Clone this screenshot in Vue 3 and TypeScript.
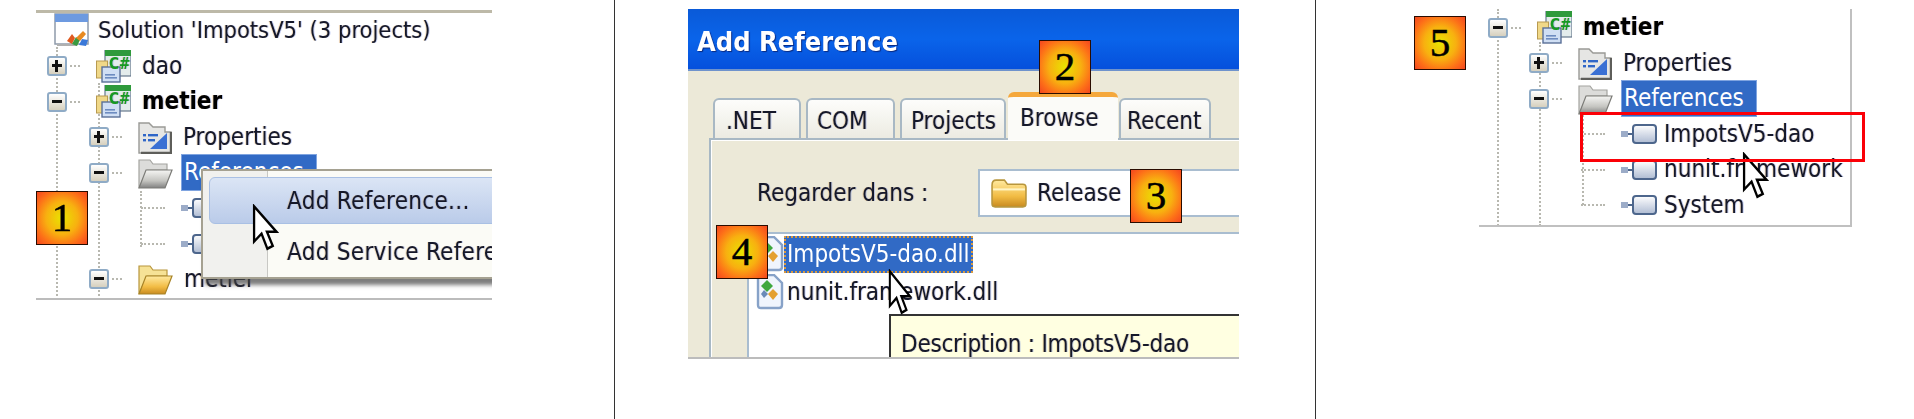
<template>
  <div class="page">
    <svg class="sprites" width="0" height="0" aria-hidden="true">
      <defs>
        <linearGradient id="g-asm" x1="0" y1="0" x2="0" y2="1">
          <stop offset="0" stop-color="#ffffff" />
          <stop offset="1" stop-color="#aebbd2" />
        </linearGradient>
        <linearGradient id="g-yellow" x1="0" y1="0" x2="0" y2="1">
          <stop offset="0" stop-color="#ffeaa0" />
          <stop offset="0.6" stop-color="#f2bc44" />
          <stop offset="1" stop-color="#c88a20" />
        </linearGradient>
        <linearGradient id="g-gray" x1="0" y1="0" x2="0" y2="1">
          <stop offset="0" stop-color="#f6f6f4" />
          <stop offset="0.6" stop-color="#c4c4c0" />
          <stop offset="1" stop-color="#808080" />
        </linearGradient>
      </defs>
      <symbol id="ic-solution" viewBox="0 0 35 35">
        <rect x="1" y="1" width="33" height="30" fill="#fff" stroke="#8f9bab" stroke-width="1.5" />
        <rect x="1" y="1" width="33" height="8" fill="#6d9ae0" />
        <rect x="3" y="31" width="20" height="2" fill="#b0b0b0" />
        <path d="M13 28l5-7 3 4-3 6z" fill="#e05a20" />
        <path d="M18 31l4-7 4 3-3 6z" fill="#3a9a40" />
        <path d="M22 25l7-7 3 3-6 7z" fill="#e88a20" />
        <path d="M25 32l3-6 6 1-2 6z" fill="#3a78d8" />
      </symbol>
      <symbol id="ic-csharp" viewBox="0 0 35 33">
        <rect x="9" y="0" width="26" height="26" fill="#e4ecec" stroke="#66788c" stroke-width="1.2" />
        <rect x="9" y="0" width="26" height="6" fill="#2f9a3c" />
        <rect x="0.5" y="11" width="11" height="17" fill="#f0d888" stroke="#b89a50" stroke-width="1" />
        <rect x="6" y="17" width="18" height="15" fill="#d0dff4" stroke="#5a7098" stroke-width="1.4" />
        <rect x="9" y="24" width="10" height="1.6" fill="#6d8cc0" />
        <rect x="9" y="27" width="12" height="1.6" fill="#6d8cc0" />
      </symbol>
      <symbol id="ic-props" viewBox="0 0 34 33">
        <path d="M1 32V2h10l4 4h12v5h6v21z" fill="#e6e6e4" stroke="#9a9a96" stroke-width="1.4" />
        <path d="M33 11v21H3" fill="none" stroke="#5e5e5a" stroke-width="2.4" />
        <rect x="5" y="13" width="3" height="2.4" fill="#2f66c8" />
        <rect x="10" y="13" width="10" height="2.4" fill="#2f66c8" />
        <rect x="5" y="18" width="3" height="2.4" fill="#2f66c8" />
        <rect x="10" y="18" width="7" height="2.4" fill="#2f66c8" />
        <path d="M12 28L29 12v16z" fill="#3a70d4" />
      </symbol>
      <symbol id="ic-folder-gray" viewBox="0 0 35 32">
        <path d="M1 31V3h11l3 4h14v6H9z" fill="#dcdcda" stroke="#a4a4a0" stroke-width="1.2" />
        <path d="M1 31l7-18h26l-7 18z" fill="url(#g-gray)" stroke="#7c7c78" stroke-width="1.2" />
      </symbol>
      <symbol id="ic-folder-yellow" viewBox="0 0 35 32">
        <path d="M1 31V3h11l3 4h14v6H9z" fill="#f6e296" stroke="#b8963c" stroke-width="1.2" />
        <path d="M1 31l7-18h26l-7 18z" fill="url(#g-yellow)" stroke="#a88428" stroke-width="1.2" />
      </symbol>
      <symbol id="ic-combo-folder" viewBox="0 0 35 30">
        <path d="M1 7c0-3 1-5 4-5h8l3 4h15c2 0 3 1 3 3v16c0 2-1 3-3 3H4c-2 0-3-1-3-3z" fill="url(#g-yellow)" stroke="#b8963c" stroke-width="1.5" />
        <path d="M2 11h31" stroke="#fff4c4" stroke-width="2" />
      </symbol>
      <symbol id="ic-asm" viewBox="0 0 36 22">
        <rect x="0" y="8" width="7" height="6" fill="#9cacc8" />
        <rect x="7" y="10" width="5" height="2" fill="#4d668c" />
        <rect x="12" y="2" width="23" height="18" rx="3" fill="url(#g-asm)" stroke="#4d668c" stroke-width="2" />
      </symbol>
      <symbol id="ic-doc" viewBox="0 0 24 24">
        <path d="M1 23V1h14l8 8v14z" fill="#fff" stroke="#8a94a4" stroke-width="1.6" />
      </symbol>
      <symbol id="ic-dll" viewBox="0 0 28 36">
        <path d="M2 4c0-2 1-3 3-3h13l8 8v22c0 2-1 3-3 3H5c-2 0-3-1-3-3z" fill="#f0f5fd" stroke="#87a2c8" stroke-width="2.4" />
        <path d="M11 6l6 6-6 6-6-6z" fill="#3ea83e" />
        <path d="M17 15l5 5-5 6-5-6z" fill="#e4a030" />
        <path d="M8 16l4 4-4 4-3-4z" fill="#6a8ab8" />
      </symbol>
      <symbol id="ic-cursor" viewBox="0 0 13 20" preserveAspectRatio="none">
        <path d="M1 1v15l3.6-3.4L7.4 19l2.6-1.2-2.8-6h4.6z" fill="#fff" stroke="#000" stroke-width="1.1" stroke-linejoin="miter" />
      </symbol>
    </svg>

    <!-- step 1: context menu on References -->
    <section class="col col-one">
      <div class="stage stage-one">
        <div class="shot shot-one">
          <div class="tree">
            <i v-for="(g, i) in guidesOne" :key="i" class="guide" :style="guideStyle(g)"></i>
            <div v-for="r in rowsOne" :key="r.id" class="row" :class="{ leaf: r.expander === 'leaf', root: r.expander === 'none' }" :style="{ paddingLeft: r.indent + 'px' }">
              <span v-if="r.expander === 'plus' || r.expander === 'minus'" class="exp-cell">
                <b class="exp" :class="r.expander"></b><i class="dash"></i>
              </span>
              <span v-else-if="r.expander === 'leaf'" class="exp-cell"><i class="dash long"></i></span>
              <svg class="icon" :class="r.icon">
                <use :href="'#ic-' + r.icon" />
                <text v-if="r.icon === 'csharp'" x="13" y="19" class="cs-text">C#</text>
              </svg>
              <span class="label" :class="{ strong: r.bold, selected: r.selected }">{{ r.label }}</span>
            </div>
          </div>
          <div class="ctx-menu">
            <div class="ctx-item hot">Add Reference...</div>
            <div class="ctx-item">Add Service Reference...</div>
          </div>
          <svg class="cursor cursor-one"><use href="#ic-cursor" /></svg>
        </div>
        <div class="badge badge-one">1</div>
      </div>
    </section>

    <!-- steps 2 to 4: Add Reference dialog -->
    <section class="col col-two">
      <div class="stage stage-two">
        <div class="shot shot-two">
          <div class="titlebar">Add Reference</div>
          <div class="tabs">
            <div v-for="t in tabs" :key="t.label" class="tab" :class="{ active: t.label === 'Browse' }" :style="{ width: t.width + 'px', paddingLeft: t.pad + 'px' }">{{ t.label }}</div>
          </div>
          <div class="tab-panel">
            <div class="lookin">
              <span class="lookin-label">Regarder dans :</span>
              <div class="combo">
                <svg class="combo-icon"><use href="#ic-combo-folder" /></svg>
                <span>Release</span>
              </div>
            </div>
            <div class="files">
              <div v-for="f in files" :key="f.name" class="file">
                <svg class="file-icon"><use href="#ic-dll" /></svg>
                <span class="file-name" :class="{ selected: f.selected }">{{ f.name }}</span>
              </div>
            </div>
          </div>
          <div class="tooltip">Description : ImpotsV5-dao</div>
          <svg class="cursor cursor-two"><use href="#ic-cursor" /></svg>
        </div>
        <div class="badge badge-two">2</div>
        <div class="badge badge-three">3</div>
        <div class="badge badge-four">4</div>
      </div>
    </section>

    <!-- step 5: the new reference in the tree -->
    <section class="col col-three">
      <div class="badge badge-five">5</div>
      <div class="stage stage-three">
        <div class="shot shot-three">
          <div class="tree">
            <i v-for="(g, i) in guidesThree" :key="i" class="guide" :style="guideStyle(g)"></i>
            <div v-for="r in rowsThree" :key="r.id" class="row" :class="{ leaf: r.expander === 'leaf', root: r.expander === 'none' }" :style="{ paddingLeft: r.indent + 'px' }">
              <span v-if="r.expander === 'plus' || r.expander === 'minus'" class="exp-cell">
                <b class="exp" :class="r.expander"></b><i class="dash"></i>
              </span>
              <span v-else-if="r.expander === 'leaf'" class="exp-cell"><i class="dash long"></i></span>
              <svg class="icon" :class="r.icon">
                <use :href="'#ic-' + r.icon" />
                <text v-if="r.icon === 'csharp'" x="13" y="19" class="cs-text">C#</text>
              </svg>
              <span class="label" :class="{ strong: r.bold, selected: r.selected }">{{ r.label }}</span>
            </div>
          </div>
          <svg class="cursor cursor-three"><use href="#ic-cursor" /></svg>
        </div>
        <div class="red-box"></div>
      </div>
    </section>
  </div>
</template>

<script setup lang="ts">
type Expander = 'plus' | 'minus' | 'leaf' | 'none'

interface TreeRow {
  id: string
  indent: number
  expander: Expander
  icon: string
  label: string
  bold?: boolean
  selected?: boolean
}

interface Guide {
  x: number
  top: number
  height: number
}

const rowsOne: TreeRow[] = [
  { id: 'sol', indent: 18, expander: 'none', icon: 'solution', label: "Solution 'ImpotsV5' (3 projects)" },
  { id: 'dao', indent: 11, expander: 'plus', icon: 'csharp', label: 'dao' },
  { id: 'metier', indent: 11, expander: 'minus', icon: 'csharp', label: 'metier', bold: true },
  { id: 'props', indent: 53, expander: 'plus', icon: 'props', label: 'Properties' },
  { id: 'refs', indent: 53, expander: 'minus', icon: 'folder-gray', label: 'References', selected: true },
  { id: 'nunit', indent: 101, expander: 'leaf', icon: 'asm', label: 'nunit.framework' },
  { id: 'system', indent: 101, expander: 'leaf', icon: 'asm', label: 'System' },
  { id: 'folder', indent: 53, expander: 'minus', icon: 'folder-yellow', label: 'metier' },
  { id: 'doc', indent: 101, expander: 'leaf', icon: 'doc', label: '' }
]

const rowsThree: TreeRow[] = [
  { id: 'metier', indent: 9, expander: 'minus', icon: 'csharp', label: 'metier', bold: true },
  { id: 'props', indent: 50, expander: 'plus', icon: 'props', label: 'Properties' },
  { id: 'refs', indent: 50, expander: 'minus', icon: 'folder-gray', label: 'References', selected: true },
  { id: 'dao', indent: 98, expander: 'leaf', icon: 'asm', label: 'ImpotsV5-dao' },
  { id: 'nunit', indent: 98, expander: 'leaf', icon: 'asm', label: 'nunit.framework' },
  { id: 'system', indent: 98, expander: 'leaf', icon: 'asm', label: 'System' }
]

const guidesOne: Guide[] = [
  { x: 20, top: 34, height: 260 },
  { x: 62, top: 70, height: 220 },
  { x: 104, top: 178, height: 56 }
]

const guidesThree: Guide[] = [
  { x: 18, top: 0, height: 217 },
  { x: 60, top: 33, height: 184 },
  { x: 103, top: 106, height: 90 }
]

const tabs = [
  { label: '.NET', width: 88, pad: 11 },
  { label: 'COM', width: 89, pad: 9 },
  { label: 'Projects', width: 106, pad: 9 },
  { label: 'Browse', width: 110, pad: 12 },
  { label: 'Recent', width: 92, pad: 6 }
]

const files = [
  { name: 'ImpotsV5-dao.dll', selected: true },
  { name: 'nunit.framework.dll', selected: false }
]

const guideStyle = (g: Guide) => ({
  left: `${g.x}px`,
  top: `${g.top}px`,
  height: `${g.height}px`
})
</script>

<style>
html,
body {
  margin: 0;
  background: #fff;
}
</style>

<style scoped>
.page {
  display: grid;
  grid-template-columns: 615px 701px 598px;
  width: 1914px;
  height: 419px;
  overflow: hidden;
  background: #fff;
  font-family: "DejaVu Sans Condensed", "DejaVu Sans", sans-serif;
  font-stretch: condensed;
  font-size: 24px;
  color: #15182a;
}

.sprites {
  position: absolute;
}

.cs-text {
  font-family: "DejaVu Sans", sans-serif;
  font-size: 15px;
  font-weight: 700;
  fill: #159a22;
}

.col {
  height: 419px;
  box-sizing: border-box;
}

.col-one {
  border-right: 1px solid #333;
  padding: 10px 0 0 36px;
}

.col-two {
  border-right: 1px solid #333;
  padding: 9px 0 0 73px;
}

.col-three {
  display: flex;
  align-items: flex-start;
  gap: 13px;
  padding: 9px 0 0 98px;
}

.stage {
  position: relative;
}

.shot {
  position: relative;
  overflow: hidden;
  box-sizing: border-box;
  filter: blur(0.55px);
  text-shadow: -1px 0 rgba(230, 150, 40, 0.28), 1px 0 rgba(50, 90, 220, 0.28);
}

.shot-one {
  width: 456px;
  height: 290px;
  border-top: 3px solid #bdb9a8;
  border-bottom: 2px solid #bcbcbc;
}

.shot-two {
  width: 551px;
  height: 350px;
  background: #ece9d8;
  border-bottom: 2px solid #bcbcbc;
}

.shot-three {
  width: 373px;
  height: 218px;
  border-right: 2px solid #c0c0c0;
  border-bottom: 2px solid #c0c0c0;
}

/* tree */
.tree {
  position: relative;
}

.shot-three .tree {
  padding-top: 1px;
}

.guide {
  position: absolute;
  border-left: 2px dotted #b8b8b0;
}

.row {
  position: relative;
  display: flex;
  align-items: center;
  height: 35.5px;
  white-space: nowrap;
}

.exp-cell {
  display: flex;
  align-items: center;
  flex: none;
  width: 49px;
}

.leaf .exp-cell {
  width: 44px;
}

.exp {
  position: relative;
  flex: none;
  box-sizing: border-box;
  width: 20px;
  height: 20px;
  border: 2px solid #8fabc6;
  border-radius: 3px;
  background: linear-gradient(#fff, #d6d0be);
}

.exp::before {
  content: "";
  position: absolute;
  left: 3px;
  right: 3px;
  top: 6px;
  height: 3px;
  background: #111;
}

.exp.plus::after {
  content: "";
  position: absolute;
  top: 2px;
  bottom: 2px;
  left: 6px;
  width: 3px;
  background: #111;
}

.dash {
  flex: none;
  width: 10px;
  margin-left: 3px;
  border-top: 2px dotted #b8b8b0;
}

.dash.long {
  width: 24px;
  margin-left: 4px;
}

.icon {
  flex: none;
  width: 35px;
  height: 33px;
}

.icon.props {
  width: 34px;
}

.icon.solution {
  height: 35px;
}

.icon.folder-gray,
.icon.folder-yellow {
  height: 32px;
}

.icon.asm {
  width: 36px;
  height: 22px;
}

.icon.doc {
  width: 24px;
  height: 24px;
  margin-left: 8px;
}

.label {
  height: 35px;
  line-height: 35px;
  margin-left: 9px;
  padding: 0 12px 0 2px;
}

.leaf .label {
  margin-left: 5px;
}

.root .label {
  margin-left: 7px;
  font-size: 23.5px;
}

.label.strong {
  font-weight: 700;
  color: #000;
}

.label.selected {
  box-sizing: border-box;
  background: #316ac5;
  color: #fff;
  outline: 1px solid #7fa4e0;
  text-shadow: none;
}

/* context menu */
.ctx-menu {
  position: absolute;
  left: 165px;
  top: 156px;
  box-sizing: border-box;
  width: 330px;
  height: 110px;
  padding: 6px 0 0 6px;
  background: linear-gradient(90deg, #f1f1ee 64px, #c8c8c4 64px, #c8c8c4 65px, #fbfbf6 65px);
  border: 2px solid #a5a191;
  box-shadow: 4px 6px 4px rgba(70, 70, 70, 0.7);
  white-space: nowrap;
}

.ctx-item {
  box-sizing: border-box;
  height: 49px;
  padding-left: 77px;
  line-height: 47px;
  letter-spacing: 0.3px;
  border: 1px solid transparent;
}

.ctx-item.hot {
  height: 47px;
  margin-bottom: 4px;
  border-color: #a9c0e4;
  border-radius: 6px 0 0 6px;
  background: linear-gradient(#dbe5f5, #bacbe9);
}

/* dialog */
.titlebar {
  box-sizing: border-box;
  height: 62px;
  padding-left: 9px;
  line-height: 66px;
  font-size: 27px;
  font-weight: 700;
  color: #fff;
  text-shadow: 1px 1px 1px #0a2a80;
  background: linear-gradient(#0a5ad8, #0a64ea 50%, #0550dc);
  border-bottom: 2px solid #6f93cc;
}

.tabs {
  display: flex;
  align-items: flex-end;
  gap: 5px;
  height: 46px;
  margin: 21px 0 0 25px;
}

.tab {
  box-sizing: border-box;
  flex: none;
  height: 40px;
  line-height: 42px;
  background: linear-gradient(#fdfdfb, #ecebe2);
  border: 2px solid #a8b8c4;
  border-bottom: 0;
  border-radius: 6px 6px 0 0;
}

.tab.active {
  position: relative;
  z-index: 1;
  height: 48px;
  margin: 0 -4px -2px -3px;
  padding-bottom: 8px;
  line-height: 42px;
  background: #fbfbf8;
  border: 0;
  border-top: 5px solid #f5a83c;
}

.tab-panel {
  height: 219px;
  margin-left: 21px;
  background: #ece9d8;
  border-top: 2px solid #a8b8c4;
  border-left: 2px solid #a8b8c4;
  box-shadow: inset 1px 1px #fff;
}

.lookin {
  display: flex;
  align-items: center;
  padding-top: 29px;
}

.lookin-label {
  flex: none;
  width: 267px;
  padding-left: 46px;
  box-sizing: border-box;
}

.combo {
  display: flex;
  align-items: center;
  flex: 1;
  box-sizing: border-box;
  height: 48px;
  padding-left: 11px;
  background: #fff;
  border: 2px solid #a9bdd0;
  border-right: 0;
}

.combo-icon {
  width: 36px;
  height: 31px;
  margin-right: 10px;
}

.files {
  height: 200px;
  margin: 15px 0 0 36px;
  padding-top: 1px;
  background: #fff;
  border-top: 2px solid #a9bdd0;
  border-left: 2px solid #a9bdd0;
}

.file {
  display: flex;
  align-items: center;
  height: 38px;
  padding-left: 7px;
}

.file-icon {
  flex: none;
  width: 28px;
  height: 36px;
}

.file-name {
  height: 37px;
  line-height: 37px;
  padding: 0 3px;
}

.file-name.selected {
  box-sizing: border-box;
  background: #316ac5;
  color: #fff;
  outline: 2px dotted #d99a40;
  outline-offset: -2px;
  text-shadow: none;
}

.tooltip {
  position: absolute;
  left: 201px;
  top: 305px;
  width: 420px;
  height: 60px;
  box-sizing: border-box;
  padding: 14px 0 0 10px;
  letter-spacing: -0.25px;
  background: #ffffe1;
  border-top: 2px solid #333;
  border-left: 2px solid #333;
  white-space: nowrap;
}

/* overlays */
.cursor {
  position: absolute;
  width: 27px;
  height: 47px;
}

.cursor-one {
  left: 216px;
  top: 191px;
}

.cursor-two {
  left: 200px;
  top: 260px;
  width: 24px;
  height: 46px;
}

.cursor-three {
  left: 263px;
  top: 143px;
}

.red-box {
  position: absolute;
  left: 101px;
  top: 103px;
  width: 285px;
  height: 50px;
  box-sizing: border-box;
  border: 3px solid #fb0007;
}

.badge {
  box-sizing: border-box;
  width: 52px;
  height: 54px;
  border: 1.5px solid #2a0c00;
  background: radial-gradient(ellipse closest-corner, #e8e400 0, #f8b010 45%, #fd7018 75%, #f4461f 100%);
  font-family: "Liberation Serif", serif;
  font-size: 41px;
  -webkit-text-stroke: 0.5px #000;
  line-height: 50px;
  text-align: center;
  color: #000;
}

.stage .badge {
  position: absolute;
}

.badge-one {
  left: 0;
  top: 181px;
}

.badge-two {
  left: 351px;
  top: 31px;
}

.badge-three {
  left: 442px;
  top: 160px;
}

.badge-four {
  left: 28px;
  top: 216px;
}

.badge-five {
  flex: none;
  margin-top: 7px;
}
</style>
